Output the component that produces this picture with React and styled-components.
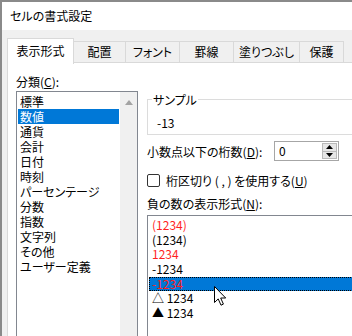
import React from "react";
import styled, { createGlobalStyle } from "styled-components";

const GlobalStyle = createGlobalStyle`
  html, body {
    margin: 0;
    padding: 0;
    background: #f0f0f0;
    overflow: hidden;
  }
  * {
    box-sizing: border-box;
  }
`;

const Window = styled.div`
  position: relative;
  width: 352px;
  height: 336px;
  overflow: hidden;
  border-top: 2px solid #8a8a8a;
  border-left: 2px solid #8a8a8a;
  background: #f0f0f0;
  font-family: "Noto Sans CJK JP", "Noto Sans", sans-serif;
  font-feature-settings: "palt";
  font-size: 12px;
  color: #000;
`;

const TitleBar = styled.div`
  height: 28px;
  line-height: 27px;
  padding-left: 8px;
  background: #fff;
`;

const Body = styled.div`
  width: 470px;
  padding: 8px 0 0 5px;
`;

const TabRow = styled.div`
  display: flex;
  align-items: flex-end;
  height: 25px;
  position: relative;
  z-index: 1;
`;

const Tab = styled.div`
  width: ${(p) => p.$w}px;
  height: ${(p) => (p.$active ? 26 : 22)}px;
  line-height: ${(p) => (p.$active ? 24 : 20)}px;
  text-align: center;
  background: ${(p) => (p.$active ? "#fff" : "#f0f0f0")};
  border: 1px solid #d9d9d9;
  border-bottom: ${(p) => (p.$active ? "none" : "1px solid #d9d9d9")};
  margin-bottom: ${(p) => (p.$active ? -1 : 0)}px;
  & + & {
    border-left: ${(p) => (p.$active ? "1px solid #d9d9d9" : "none")};
  }
`;

const Panel = styled.div`
  display: grid;
  grid-template-columns: 122px 1fr;
  column-gap: 9px;
  height: 300px;
  padding: 11px 0 0 8px;
  background: #fff;
  border: 1px solid #d9d9d9;
  margin-top: -1px;
`;

const Column = styled.div`
  display: flex;
  flex-direction: column;
  padding-top: ${(p) => p.$top || 0}px;
`;

const Label = styled.div`
  height: 15px;
  line-height: 15px;
  white-space: nowrap;
  margin-top: ${(p) => p.$mt || 0}px;
  margin-bottom: ${(p) => p.$mb || 0}px;
`;

const ListBox = styled.div`
  display: flex;
  height: 280px;
  border: 1px solid #828790;
  background: #fff;
`;

const Items = styled.div`
  flex: 1;
  padding: 2px 1px;
`;

const Item = styled.div`
  height: ${(p) => p.$h || 15}px;
  line-height: ${(p) => p.$h || 15}px;
  padding-left: ${(p) => p.$pl || 2}px;
  white-space: nowrap;
  color: ${(p) => (p.$red ? "#ff1f1f" : p.$selected ? "#fff" : "#000")};
  background: ${(p) => (p.$selected ? "#0078d7" : "transparent")};
  outline: ${(p) => (p.$focus ? "1px dotted #000" : "none")};
  outline-offset: -1px;
`;

const ScrollBar = styled.div`
  width: 17px;
  background: #f0f0f0;
  display: flex;
  justify-content: center;
  padding-top: 8px;
`;

const GroupBox = styled.fieldset`
  margin: 0;
  padding: 0 9px 4px;
  border: 1px solid #dcdcdc;
  min-width: 0;
  legend {
    margin-left: -5px;
    padding: 0 1px;
    line-height: 15px;
  }
`;

const SampleValue = styled.div`
  margin-top: 8px;
  line-height: 15px;
`;

const FieldRow = styled.div`
  display: grid;
  grid-template-columns: 127px 65px;
  align-items: center;
  margin-top: 6px;
`;

const Spinner = styled.div`
  display: flex;
  height: 20px;
  border: 1px solid #a6a6a6;
  background: #fff;
  padding: 1px;
`;

const SpinValue = styled.div`
  flex: 1;
  line-height: 16px;
  padding-left: 3px;
`;

const SpinButtons = styled.div`
  display: flex;
  flex-direction: column;
  width: 15px;
  border: 1px solid #b9b9b9;
`;

const SpinButton = styled.div`
  flex: 1;
  display: flex;
  align-items: center;
  justify-content: center;
  background: #e6e6e6;
  & + & {
    border-top: 1px solid #b9b9b9;
  }
`;

const CheckRow = styled.div`
  display: flex;
  align-items: center;
  gap: 6px;
  height: 15px;
  margin-top: 12px;
`;

const CheckBox = styled.div`
  width: 13px;
  height: 13px;
  border: 1px solid #333;
  border-radius: 2px;
  background: #fff;
`;

const NegList = styled(ListBox)`
  height: 130px;
`;

const NegItems = styled(Items)`
  padding: 2px 1px;
`;

const Cursor = styled.svg`
  position: absolute;
  left: 211px;
  top: 283px;
`;

const categories = [
  "標準",
  "数値",
  "通貨",
  "会計",
  "日付",
  "時刻",
  "パーセンテージ",
  "分数",
  "指数",
  "文字列",
  "その他",
  "ユーザー定義",
];

const negatives = [
  { text: "(1234)", red: true },
  { text: "(1234)" },
  { text: "1234", red: true },
  { text: "-1234" },
  { text: "-1234", red: true, selected: true },
  { text: "△ 1234" },
  { text: "▲ 1234" },
];

const tabs = [
  { label: "表示形式", w: 67 },
  { label: "配置", w: 52 },
  { label: "フォント", w: 54 },
  { label: "罫線", w: 54 },
  { label: "塗りつぶし", w: 66 },
  { label: "保護", w: 44 },
];

export default function App() {
  return (
    <Window>
      <GlobalStyle />
      <TitleBar>セルの書式設定</TitleBar>
      <Body>
        <TabRow>
          {tabs.map((t, i) => (
            <Tab key={t.label} $w={t.w} $active={i === 0}>
              {t.label}
            </Tab>
          ))}
        </TabRow>
        <Panel>
          <Column>
            <Label $mb={2}>
              分類(<u>C</u>):
            </Label>
            <ListBox>
              <Items>
                {categories.map((c, i) => (
                  <Item key={c} $selected={i === 1}>
                    {c}
                  </Item>
                ))}
              </Items>
              <ScrollBar>
                <svg width="8" height="5" viewBox="0 0 8 5">
                  <path d="M0 5 L4 0 L8 5 Z" fill="#a3a3a3" />
                </svg>
              </ScrollBar>
            </ListBox>
          </Column>
          <Column $top={18}>
            <GroupBox>
              <legend>サンプル</legend>
              <SampleValue>-13</SampleValue>
            </GroupBox>
            <FieldRow>
              <Label>
                小数点以下の桁数(<u>D</u>):
              </Label>
              <Spinner>
                <SpinValue>0</SpinValue>
                <SpinButtons>
                  <SpinButton>
                    <svg width="7" height="4" viewBox="0 0 7 4">
                      <path d="M0 4 L3.5 0 L7 4 Z" fill="#000" />
                    </svg>
                  </SpinButton>
                  <SpinButton>
                    <svg width="7" height="4" viewBox="0 0 7 4">
                      <path d="M0 0 L7 0 L3.5 4 Z" fill="#000" />
                    </svg>
                  </SpinButton>
                </SpinButtons>
              </Spinner>
            </FieldRow>
            <CheckRow>
              <CheckBox />
              <span>
                桁区切り ( , ) を使用する(<u>U</u>)
              </span>
            </CheckRow>
            <Label $mt={8} $mb={4}>
              負の数の表示形式(<u>N</u>):
            </Label>
            <NegList>
              <NegItems>
                {negatives.map((n, i) => (
                  <Item
                    key={i}
                    $h={14.7}
                    $pl={3}
                    $red={n.red}
                    $selected={n.selected}
                    $focus={n.selected}
                  >
                    {n.text}
                  </Item>
                ))}
              </NegItems>
            </NegList>
          </Column>
        </Panel>
      </Body>
      <Cursor width="14" height="22" viewBox="0 0 14 22">
        <path
          d="M1.5 1.5 L1.5 17.5 L5.2 13.9 L8 20.2 L10.4 19.1 L7.7 13 L12.7 13 Z"
          fill="#fff"
          stroke="#000"
          strokeWidth="1"
          strokeLinejoin="miter"
        />
      </Cursor>
    </Window>
  );
}
